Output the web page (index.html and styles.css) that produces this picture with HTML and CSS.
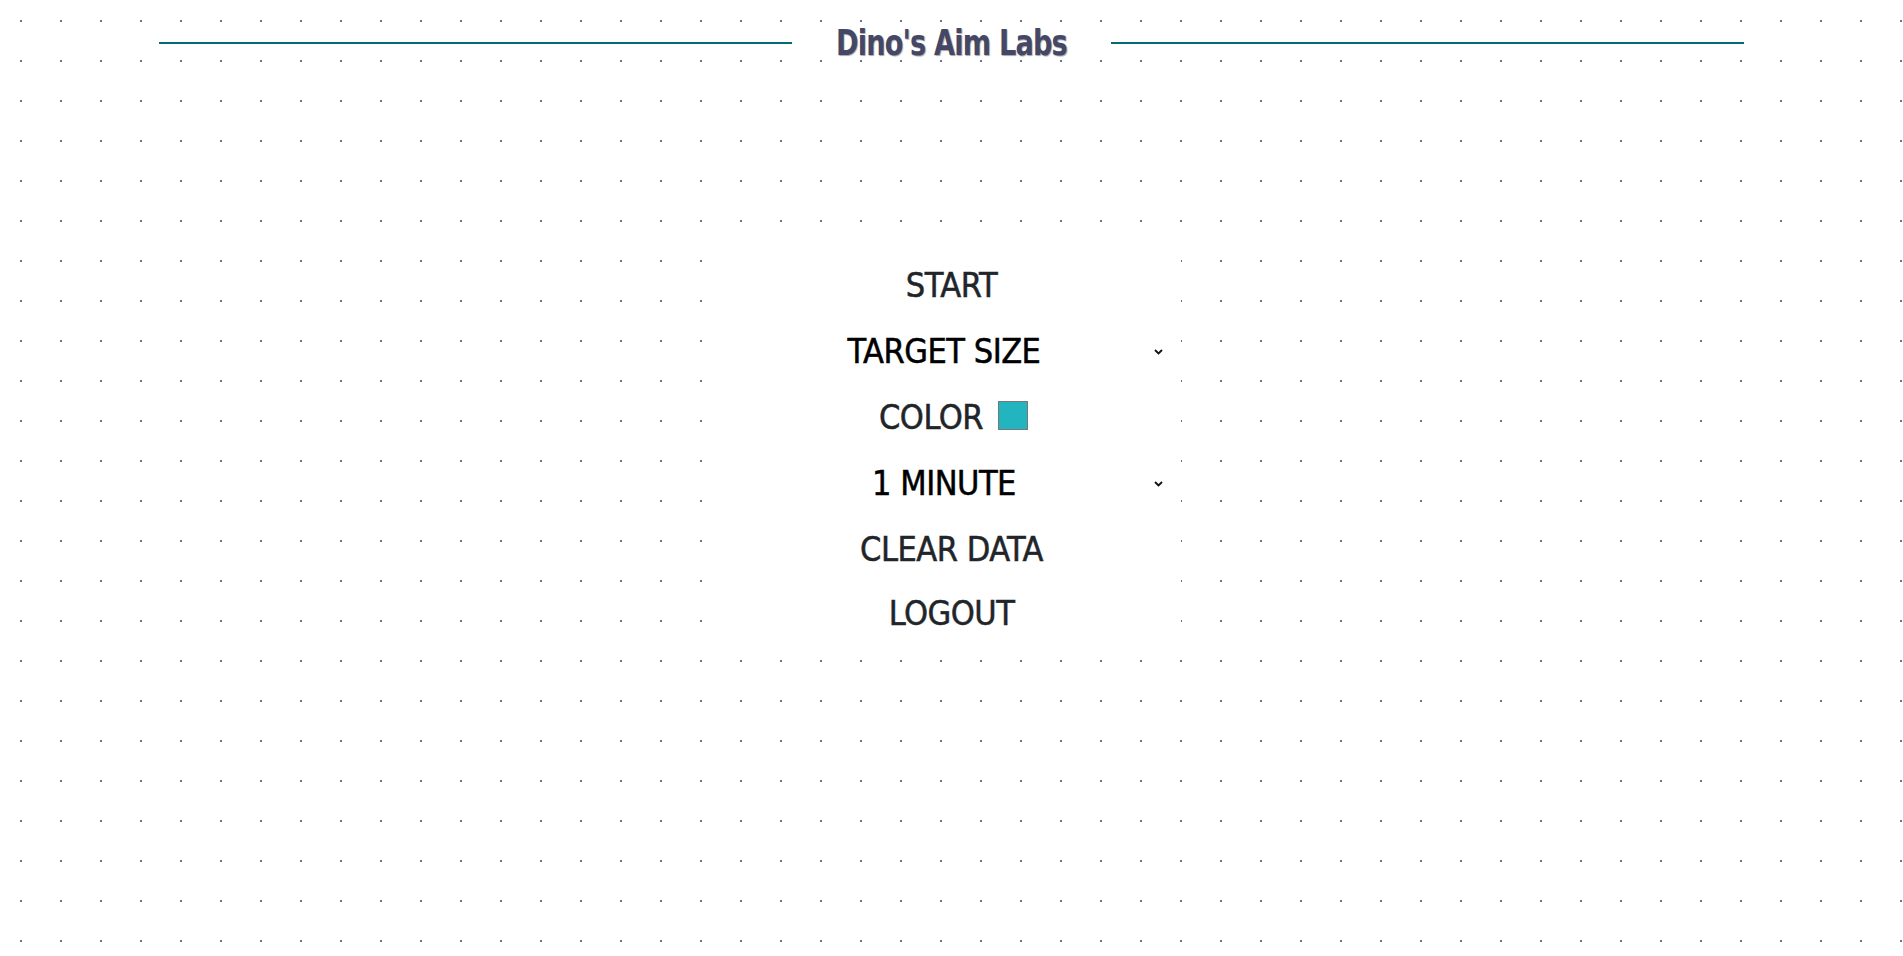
FILE: index.html
```html
<!DOCTYPE html>
<html lang="en">
<head>
<meta charset="utf-8">
<title>Dino's Aim Labs</title>
<link rel="stylesheet" href="styles.css">
</head>
<body>
<header class="header">
  <span class="rule"></span>
  <h1 class="title"><span class="title-text">Dino's Aim Labs</span></h1>
  <span class="rule"></span>
</header>
<main class="menu">
  <button class="item">START</button>
  <div class="item select">
    <span class="select-text">TARGET SIZE</span>
    <svg class="chev" width="9" height="6" viewBox="0 0 9 6"><polyline points="1,1 4.5,4.5 8,1" fill="none" stroke="#111" stroke-width="1.8"/></svg>
  </div>
  <div class="item color-row">
    <span>COLOR</span>
    <span class="swatch"></span>
  </div>
  <div class="item select">
    <span class="select-text">1 MINUTE</span>
    <svg class="chev" width="9" height="6" viewBox="0 0 9 6"><polyline points="1,1 4.5,4.5 8,1" fill="none" stroke="#111" stroke-width="1.8"/></svg>
  </div>
  <button class="item">CLEAR DATA</button>
  <button class="item last">LOGOUT</button>
</main>
</body>
</html>
```
FILE: styles.css
```css
html, body {
  margin: 0;
  padding: 0;
}
body {
  min-height: 956px;
  background-color: #fff;
  background-image: conic-gradient(at 2px 2px, transparent 270deg, #6f7480 0);
  background-size: 40px 40px;
  background-position: 20px 20px;
  font-family: "DejaVu Sans Condensed", "Liberation Sans", sans-serif;
}
.header {
  display: flex;
  align-items: center;
  gap: 22px;
  margin: 0 159px;
  height: 85px;
}
.rule {
  flex: 1;
  height: 2px;
  background: #016c73;
}
.title {
  margin: 0;
  font-size: 36px;
  font-weight: bold;
  color: #444866;
  line-height: 1;
}
.title-text {
  display: inline-block;
  letter-spacing: -1px;
  transform: scaleX(0.84);
  text-shadow: 1px 1px 1px rgba(0,0,0,0.35);
}
.menu {
  width: 459px;
  margin: 167px auto 0;
  background: #fff;
  display: flex;
  flex-direction: column;
}
.item {
  height: 66px;
  display: flex;
  align-items: center;
  justify-content: center;
  font-family: inherit;
  font-size: 34px;
  letter-spacing: -0.5px;
  color: #212529;
  -webkit-text-stroke: 0.5px currentColor;
  background: transparent;
  border: 0;
  padding: 0;
}
.item.last {
  height: 62px;
}
.select {
  position: relative;
  color: #000;
  padding-right: 15px;
}
.select-text {
  flex: 1;
  text-align: center;
}
.chev {
  position: absolute;
  right: 18px;
  top: 31px;
}
.color-row {
  gap: 15px;
  padding-left: 4px;
}
.swatch {
  width: 28px;
  height: 27px;
  background: #22b5c0;
  border: 1px solid #777;
  margin-top: -3px;
}
```
